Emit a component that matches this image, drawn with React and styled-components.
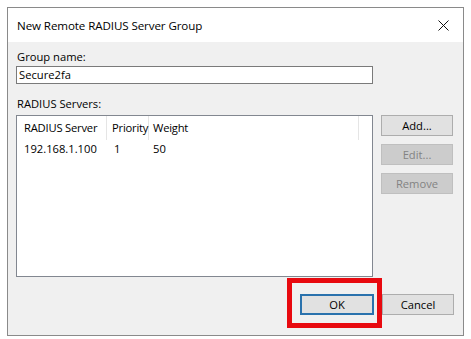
import React from "react";
import styled, { createGlobalStyle } from "styled-components";

const Global = createGlobalStyle`
  html, body { margin: 0; padding: 0; background: #ffffff; }
  body { font-family: "Segoe UI", "Open Sans", "Liberation Sans", sans-serif; font-size: 11.2px; color: #000; }
  * { box-sizing: border-box; }
`;

const Page = styled.div`
  padding: 7px 0 0 7px;
  width: 471px;
  height: 339px;
`;

const Window = styled.div`
  width: 457px;
  height: 329px;
  border: 1px solid #8a8a8a;
  display: flex;
  flex-direction: column;
  background: #f0f0f0;
`;

const TitleBar = styled.div`
  height: 34px;
  flex: none;
  background: #ffffff;
  display: flex;
  align-items: center;
  justify-content: space-between;
  padding: 0 10px 0 9px;
  font-size: 11.6px;
  letter-spacing: -0.1px;
`;

const CloseIcon = styled.svg`
  width: 11px;
  height: 11px;
  margin-right: 4px;
  margin-top: 1px;
`;

const Body = styled.div`
  flex: 1;
  display: flex;
  flex-direction: column;
  padding: 7px 9px 0 8px;
`;

const Label = styled.div`
  height: 15px;
  line-height: 15px;
  padding-left: 1px;
  margin-top: ${(p) => p.$mt || 0}px;
`;

const TextField = styled.div`
  margin-top: 2px;
  width: 357px;
  height: 18px;
  border: 1px solid #7a7a7a;
  background: #fff;
  padding-left: 2px;
  line-height: 16px;
`;

const ServersRow = styled.div`
  margin-top: 4px;
  display: flex;
  gap: 8px;
`;

const ListBox = styled.div`
  width: 357px;
  height: 162px;
  border: 1px solid #828790;
  background: #fff;
`;

const HeaderRow = styled.div`
  display: flex;
  height: 24px;
`;

const HeaderCell = styled.div`
  width: ${(p) => p.$w}px;
  padding-left: ${(p) => p.$pl}px;
  line-height: 24px;
  border-right: 1px solid #e5e5e5;
  white-space: nowrap;
  letter-spacing: -0.2px;
`;

const DataRow = styled.div`
  display: flex;
  height: 17px;
  line-height: 17px;
`;

const DataCell = styled.div`
  width: ${(p) => p.$w}px;
  padding-left: ${(p) => p.$pl}px;
  white-space: nowrap;
`;

const ButtonColumn = styled.div`
  display: flex;
  flex-direction: column;
  gap: 8px;
`;

const Button = styled.div`
  width: ${(p) => p.$w || 72}px;
  height: 21px;
  display: flex;
  align-items: center;
  justify-content: center;
  background: ${(p) => (p.$disabled ? "#cccccc" : "#e1e1e1")};
  border: ${(p) => (p.$focused ? "2px solid #2a72ad" : p.$disabled ? "1px solid #bfbfbf" : "1px solid #adadad")};
  color: ${(p) => (p.$disabled ? "#838383" : "#000")};
`;

const Footer = styled.div`
  margin-top: 17px;
  display: flex;
  justify-content: flex-end;
  gap: 8px;
`;

const Highlight = styled.div`
  position: relative;
`;

const RedBox = styled.div`
  position: absolute;
  left: -13px;
  right: -8px;
  top: -16px;
  bottom: -13px;
  border: 5px solid #e8090f;
  pointer-events: none;
`;

const columns = [
  { title: "RADIUS Server", w: 90, pl: 7, value: "192.168.1.100" },
  { title: "Priority", w: 42, pl: 5, value: "1" },
  { title: "Weight", w: 210, pl: 4, value: "50" },
];

export default function App() {
  return (
    <>
      <Global />
      <Page>
        <Window>
          <TitleBar>
            <span>New Remote RADIUS Server Group</span>
            <CloseIcon viewBox="0 0 11 11">
              <path d="M0.5 0.5 L10.5 10.5 M10.5 0.5 L0.5 10.5" stroke="#111" strokeWidth="1" fill="none" />
            </CloseIcon>
          </TitleBar>
          <Body>
            <Label>Group name:</Label>
            <TextField>Secure2fa</TextField>
            <Label $mt={12}>RADIUS Servers:</Label>
            <ServersRow>
              <ListBox>
                <HeaderRow>
                  {columns.map((c) => (
                    <HeaderCell key={c.title} $w={c.w} $pl={c.pl}>
                      {c.title}
                    </HeaderCell>
                  ))}
                </HeaderRow>
                <DataRow>
                  {columns.map((c) => (
                    <DataCell key={c.title} $w={c.w} $pl={c.pl + (c.title === "Priority" ? 2 : 0)}>
                      {c.value}
                    </DataCell>
                  ))}
                </DataRow>
              </ListBox>
              <ButtonColumn>
                <Button>Add...</Button>
                <Button $disabled>Edit...</Button>
                <Button $disabled>Remove</Button>
              </ButtonColumn>
            </ServersRow>
            <Footer>
              <Highlight>
                <Button $w={74} $focused>OK</Button>
                <RedBox />
              </Highlight>
              <Button>Cancel</Button>
            </Footer>
          </Body>
        </Window>
      </Page>
    </>
  );
}
